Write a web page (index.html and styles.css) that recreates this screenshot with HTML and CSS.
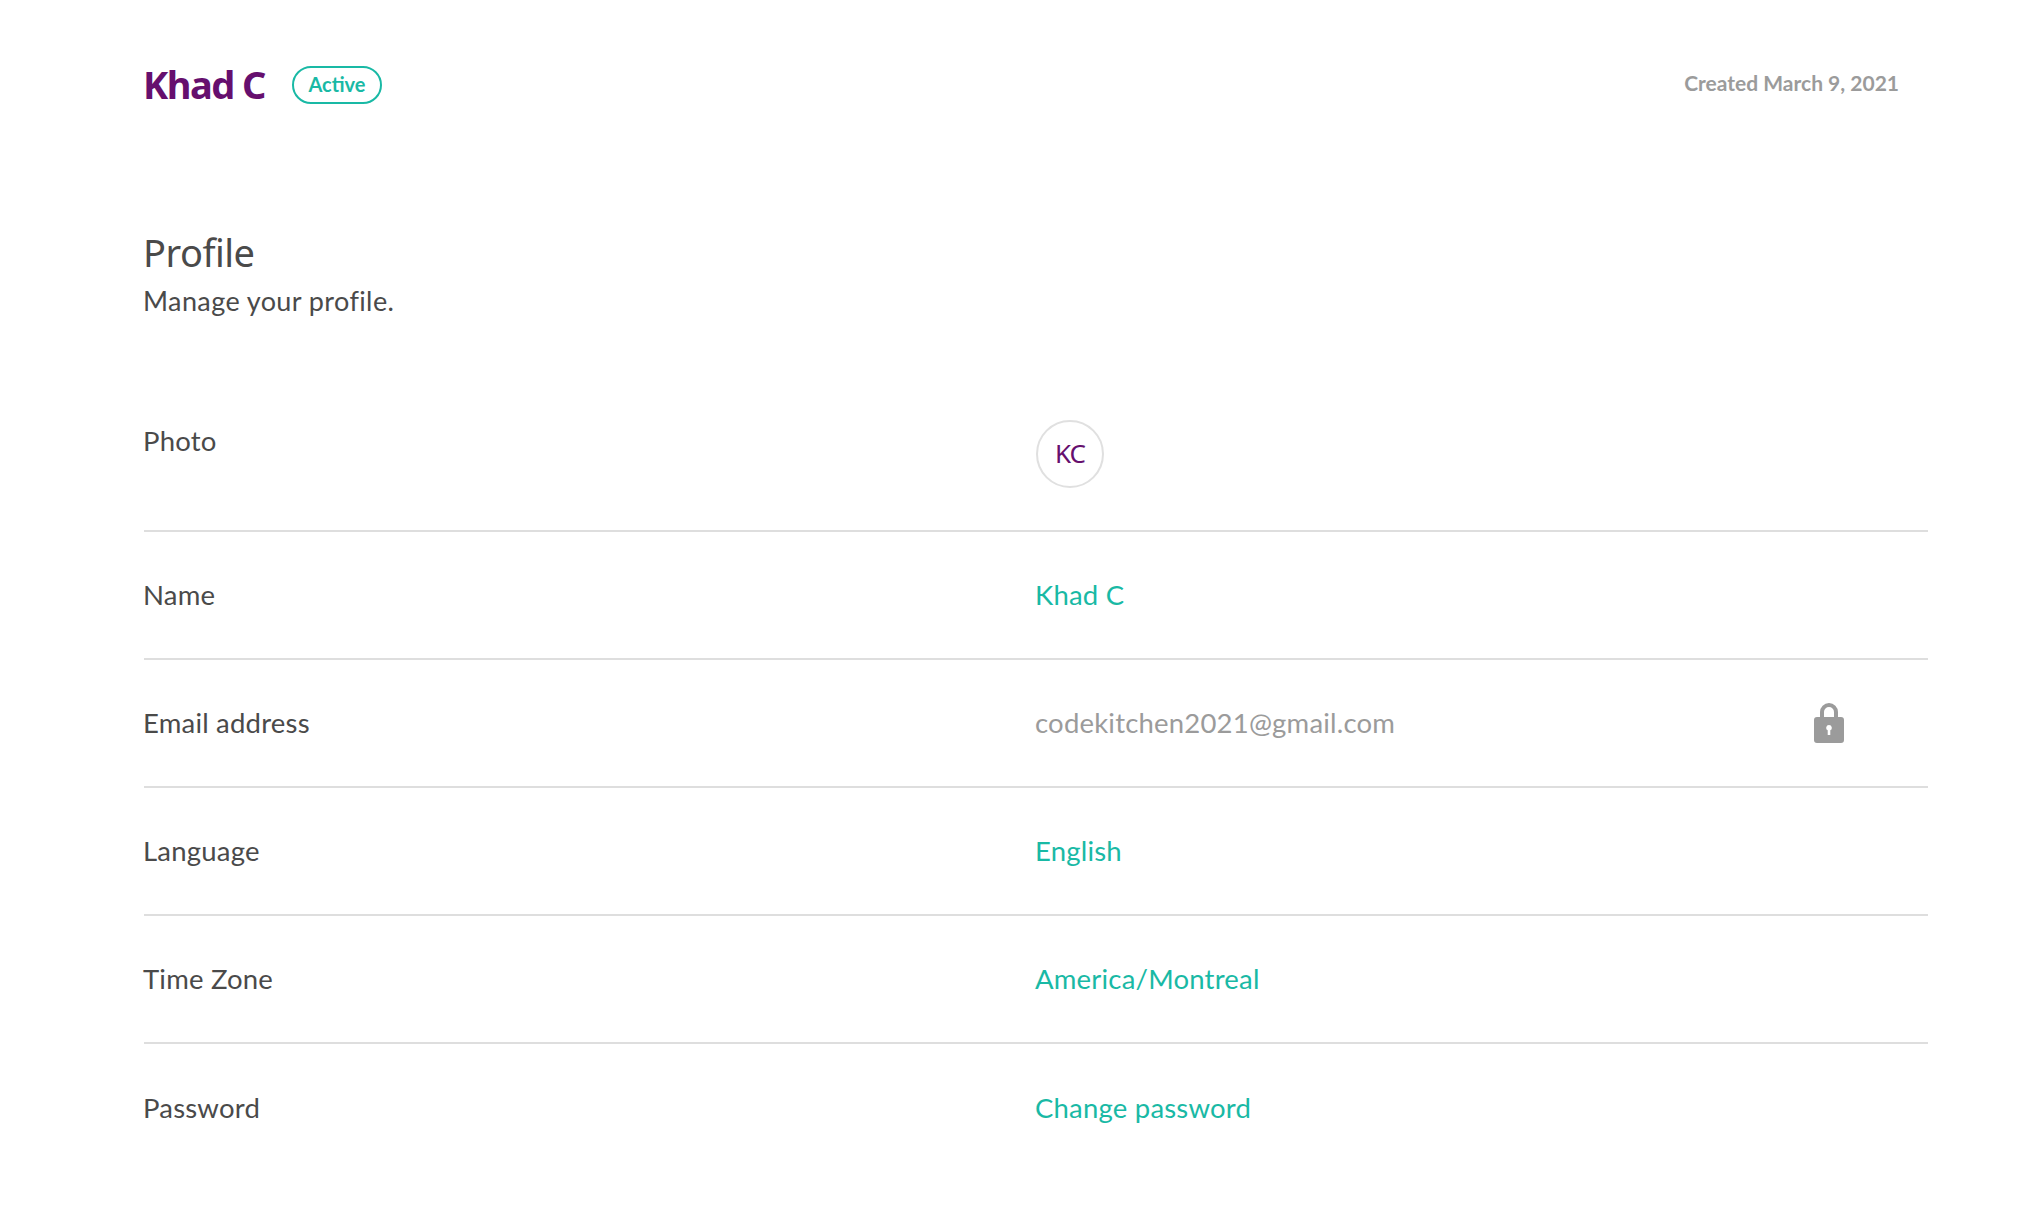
FILE: index.html
```html
<!DOCTYPE html>
<html lang="en">
<head>
<meta charset="utf-8">
<title>Profile</title>
<link rel="stylesheet" href="styles.css">
</head>
<body>
<main class="page">
  <header class="top">
    <div class="identity">
      <h1 class="user-name">Khad C</h1>
      <span class="badge">Active</span>
    </div>
    <div class="created">Created March 9, 2021</div>
  </header>
  <section class="intro">
    <h2 class="title">Profile</h2>
    <p class="subtitle">Manage your profile.</p>
  </section>
  <div class="rows">
    <div class="row row-photo">
      <div class="label">Photo</div>
      <div class="value"><div class="avatar">KC</div></div>
    </div>
    <div class="row">
      <div class="label">Name</div>
      <div class="value link">Khad C</div>
    </div>
    <div class="row">
      <div class="label">Email address</div>
      <div class="value muted">codekitchen2021@gmail.com</div>
      <svg class="lock" width="30" height="40" viewBox="0 0 30 40" aria-hidden="true">
        <path class="lock-body" fill-rule="evenodd" d="M3 14h24a3 3 0 0 1 3 3v20a3 3 0 0 1-3 3H3a3 3 0 0 1-3-3V17a3 3 0 0 1 3-3zM15 22a2.800 2.800 0 0 0-1.300 5.300V32h2.600v-4.700A2.800 2.800 0 0 0 15 22z"/>
        <path class="lock-shackle" d="M8 15V9a7 7 0 0 1 14 0V15"/>
      </svg>
    </div>
    <div class="row">
      <div class="label">Language</div>
      <div class="value link">English</div>
    </div>
    <div class="row">
      <div class="label">Time Zone</div>
      <div class="value link">America/Montreal</div>
    </div>
    <div class="row">
      <div class="label">Password</div>
      <div class="value link">Change password</div>
    </div>
  </div>
</main>
</body>
</html>
```

FILE: styles.css
```css
* { box-sizing: border-box; }
html, body { margin: 0; background: #fff; }
body { font-family: "Lato", "Liberation Sans", sans-serif; color: #4a4a4a; }
.page { padding: 65px 108px 0 143px; }
.top { display: flex; justify-content: space-between; align-items: center; height: 38px; padding-right: 29px; }
.identity { display: flex; align-items: center; gap: 27px; }
.user-name { margin: 0; font: 700 38px/38px "Noto Sans", sans-serif; color: #660f6e; letter-spacing: -1.5px; }
.badge { display: flex; align-items: center; justify-content: center; width: 90px; height: 38px; margin-top: 2px; border: 2px solid #19b9a5; border-radius: 19px; padding-bottom: 2px; font-size: 20px; font-weight: 700; color: #19b9a5; }
.created { font-size: 21px; font-weight: 700; color: #9b9b9b; margin-top: -3px; }
.intro { margin-top: 125px; }
.title { margin: 0; font: 400 38px/48px "Noto Sans", sans-serif; color: #4a4a4a; letter-spacing: -0.5px; }
.subtitle { margin: 0; padding-top: 1px; font-size: 27px; line-height: 48px; color: #4a4a4a; letter-spacing: 0.4px; }
.rows { margin-top: 79px; margin-left: 1px; }
.row { display: flex; align-items: center; height: 128px; padding-bottom: 1px; border-bottom: 2px solid #dedede; font-size: 27.500px; letter-spacing: 0.2px; }
.row:last-child { border-bottom: 0; }
.row-photo { align-items: flex-start; padding-bottom: 0; }
.row-photo .label { margin-top: 20px; }
.label { width: 892px; margin-left: -1px; flex: none; }
.value { flex: 1; }
.link { color: #19b9a5; }
.muted { color: #9b9b9b; }
.avatar { display: flex; align-items: center; justify-content: center; width: 68px; height: 68px; border: 2px solid #e0e0e0; border-radius: 50%; margin-top: 16px; margin-left: 1px; padding-bottom: 2px; font: 400 26px/1 "Noto Sans", sans-serif; color: #660f6e; letter-spacing: -1px; }
.lock { flex: none; margin-right: 84px; }
.lock-body { fill: #9b9b9b; }
.lock-shackle { fill: none; stroke: #9b9b9b; stroke-width: 4; }
```
